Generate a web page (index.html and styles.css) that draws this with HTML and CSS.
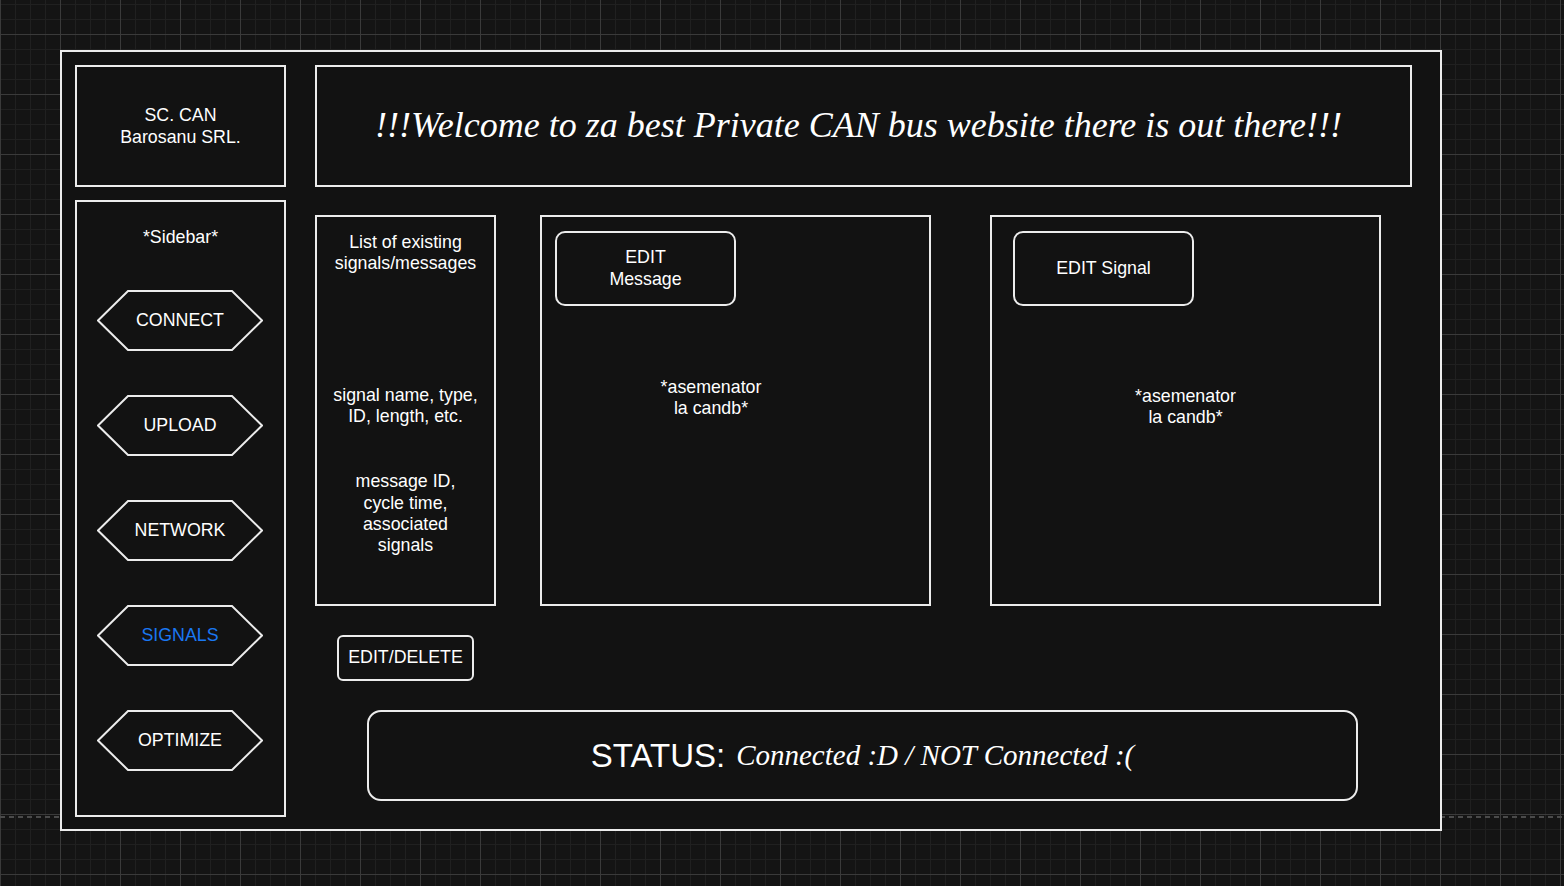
FILE: index.html
```html
<!DOCTYPE html>
<html lang="en">

<head>
    <meta charset="UTF-8">
    <meta name="viewport" content="width=device-width, initial-scale=1.0">
    <title>SC. CAN Barosanu SRL.</title>
    <link rel="stylesheet" href="styles.css">
</head>

<body>

    <div class="frame">
        <div class="left-col">
            <div class="logo box">
                <p>SC. CAN<br>Barosanu SRL.</p>
            </div>
            <div class="sidebar box">
                <p class="sidebar-title">*Sidebar*</p>
                <div class="hex-list">
                    <div class="hex">
                        <svg viewBox="0 0 166 61" width="166" height="61"><polygon points="1,30.5 31,1 135,1 165,30.5 135,60 31,60" /></svg>
                        <span>CONNECT</span>
                    </div>
                    <div class="hex">
                        <svg viewBox="0 0 166 61" width="166" height="61"><polygon points="1,30.5 31,1 135,1 165,30.5 135,60 31,60" /></svg>
                        <span>UPLOAD</span>
                    </div>
                    <div class="hex">
                        <svg viewBox="0 0 166 61" width="166" height="61"><polygon points="1,30.5 31,1 135,1 165,30.5 135,60 31,60" /></svg>
                        <span>NETWORK</span>
                    </div>
                    <div class="hex active">
                        <svg viewBox="0 0 166 61" width="166" height="61"><polygon points="1,30.5 31,1 135,1 165,30.5 135,60 31,60" /></svg>
                        <span>SIGNALS</span>
                    </div>
                    <div class="hex">
                        <svg viewBox="0 0 166 61" width="166" height="61"><polygon points="1,30.5 31,1 135,1 165,30.5 135,60 31,60" /></svg>
                        <span>OPTIMIZE</span>
                    </div>
                </div>
            </div>
        </div>

        <div class="main">
            <div class="header box">
                <h1>!!!Welcome to za best Private CAN bus website there is out there!!!</h1>
            </div>

            <div class="panels">
                <div class="list-box box">
                    <p>List of existing<br>signals/messages</p>
                    <p class="list-sig">signal name, type,<br>ID, length, etc.</p>
                    <p class="list-msg">message ID,<br>cycle time,<br>associated<br>signals</p>
                </div>
                <div class="edit-box box">
                    <div class="edit-btn">EDIT<br>Message</div>
                    <p class="note note-msg">*asemenator<br>la candb*</p>
                </div>
                <div class="edit-box edit-signal box">
                    <div class="edit-btn">EDIT Signal</div>
                    <p class="note note-sig">*asemenator<br>la candb*</p>
                </div>
            </div>

            <div class="small-btn">EDIT/DELETE</div>

            <div class="status">
                <span class="status-label">STATUS:</span>
                <span class="status-value">Connected :D / NOT Connected :(</span>
            </div>
        </div>
    </div>

</body>

</html>
```

FILE: styles.css
```css
body {
    margin: 0;
    width: 1564px;
    height: 886px;
    overflow: hidden;
    font-family: 'Liberation Sans', Arial, sans-serif;
    font-size: 17.8px;
    line-height: 1.2;
    color: #ffffff;
    background-color: #141414;
    background-image:
        repeating-linear-gradient(90deg, #4a4a4a 0 5px, transparent 5px 9px),
        linear-gradient(90deg, #3a3a3a 1px, transparent 1px),
        linear-gradient(#3a3a3a 1px, transparent 1px),
        linear-gradient(90deg, #202020 1px, transparent 1px),
        linear-gradient(#202020 1px, transparent 1px);
    background-size: 100% 2px, 60px 60px, 60px 60px, 15px 15px, 15px 15px;
    background-position: 0 816px, 0 0, 0 34px, 0 0, 0 4px;
    background-repeat: no-repeat, repeat, repeat, repeat, repeat;
}

p {
    margin: 0;
}

.box {
    border: 2px solid #ececec;
    box-sizing: border-box;
    background-color: #121212;
}

.frame {
    margin: 50px 0 0 60px;
    width: 1382px;
    height: 781px;
    box-sizing: border-box;
    border: 2px solid #ececec;
    background-color: #121212;
    padding: 13px 0 0 13px;
    display: flex;
    gap: 28px;
}

/* left column */
.left-col {
    width: 211px;
    display: flex;
    flex-direction: column;
    gap: 13px;
}

.logo {
    height: 122px;
    display: flex;
    align-items: center;
    justify-content: center;
    text-align: center;
    padding-top: 1px;
}

.sidebar {
    height: 617px;
    padding-top: 25px;
    text-align: center;
}

.hex-list {
    margin-top: 42px;
    display: flex;
    flex-direction: column;
    align-items: center;
    gap: 44px;
}

.hex {
    position: relative;
    width: 166px;
    height: 61px;
    margin-left: -1px;
    display: flex;
    align-items: center;
    justify-content: center;
}

.hex svg {
    position: absolute;
    left: 0;
    top: 0;
}

.hex polygon {
    fill: #121212;
    stroke: #ececec;
    stroke-width: 2;
}

.hex span {
    position: relative;
}

.hex.active span {
    color: #1a78f2;
}

/* main area */
.main {
    display: flex;
    flex-direction: column;
    margin-left: 1px;
}

.header {
    width: 1097px;
    height: 122px;
    display: flex;
    align-items: center;
    justify-content: center;
}

.header h1 {
    margin: 0 0 0 -10px;
    font-family: 'Liberation Serif', 'Times New Roman', serif;
    font-style: italic;
    font-weight: normal;
    font-size: 36px;
}

.panels {
    margin-top: 28px;
    display: flex;
    height: 391px;
}

.list-box {
    width: 181px;
    padding-top: 15px;
    text-align: center;
}

.list-sig {
    margin-top: 110px;
}

.list-msg {
    margin-top: 44px;
}

.edit-box {
    width: 391px;
    margin-left: 44px;
    padding: 14px 0 0 13px;
}

.edit-signal {
    margin-left: 59px;
    padding-left: 21px;
}

.edit-btn {
    width: 181px;
    height: 75px;
    box-sizing: border-box;
    border: 2px solid #ececec;
    border-radius: 10px;
    display: flex;
    align-items: center;
    justify-content: center;
    text-align: center;
}

.note {
    text-align: center;
}

.note-msg {
    width: 200px;
    margin: 71px 0 0 56px;
}

.note-sig {
    margin: 80px 0 0 -21px;
}

.small-btn {
    margin: 29px 0 0 22px;
    width: 137px;
    height: 46px;
    box-sizing: border-box;
    border: 2px solid #ececec;
    border-radius: 6px;
    display: flex;
    align-items: center;
    justify-content: center;
}

.status {
    margin: 29px 0 0 52px;
    width: 991px;
    height: 91px;
    box-sizing: border-box;
    border: 2px solid #ececec;
    border-radius: 14px;
    display: flex;
    align-items: center;
    justify-content: center;
    gap: 11px;
}

.status-label {
    font-size: 33px;
}

.status-value {
    font-family: 'Liberation Serif', 'Times New Roman', serif;
    font-style: italic;
    font-size: 29px;
}
```
